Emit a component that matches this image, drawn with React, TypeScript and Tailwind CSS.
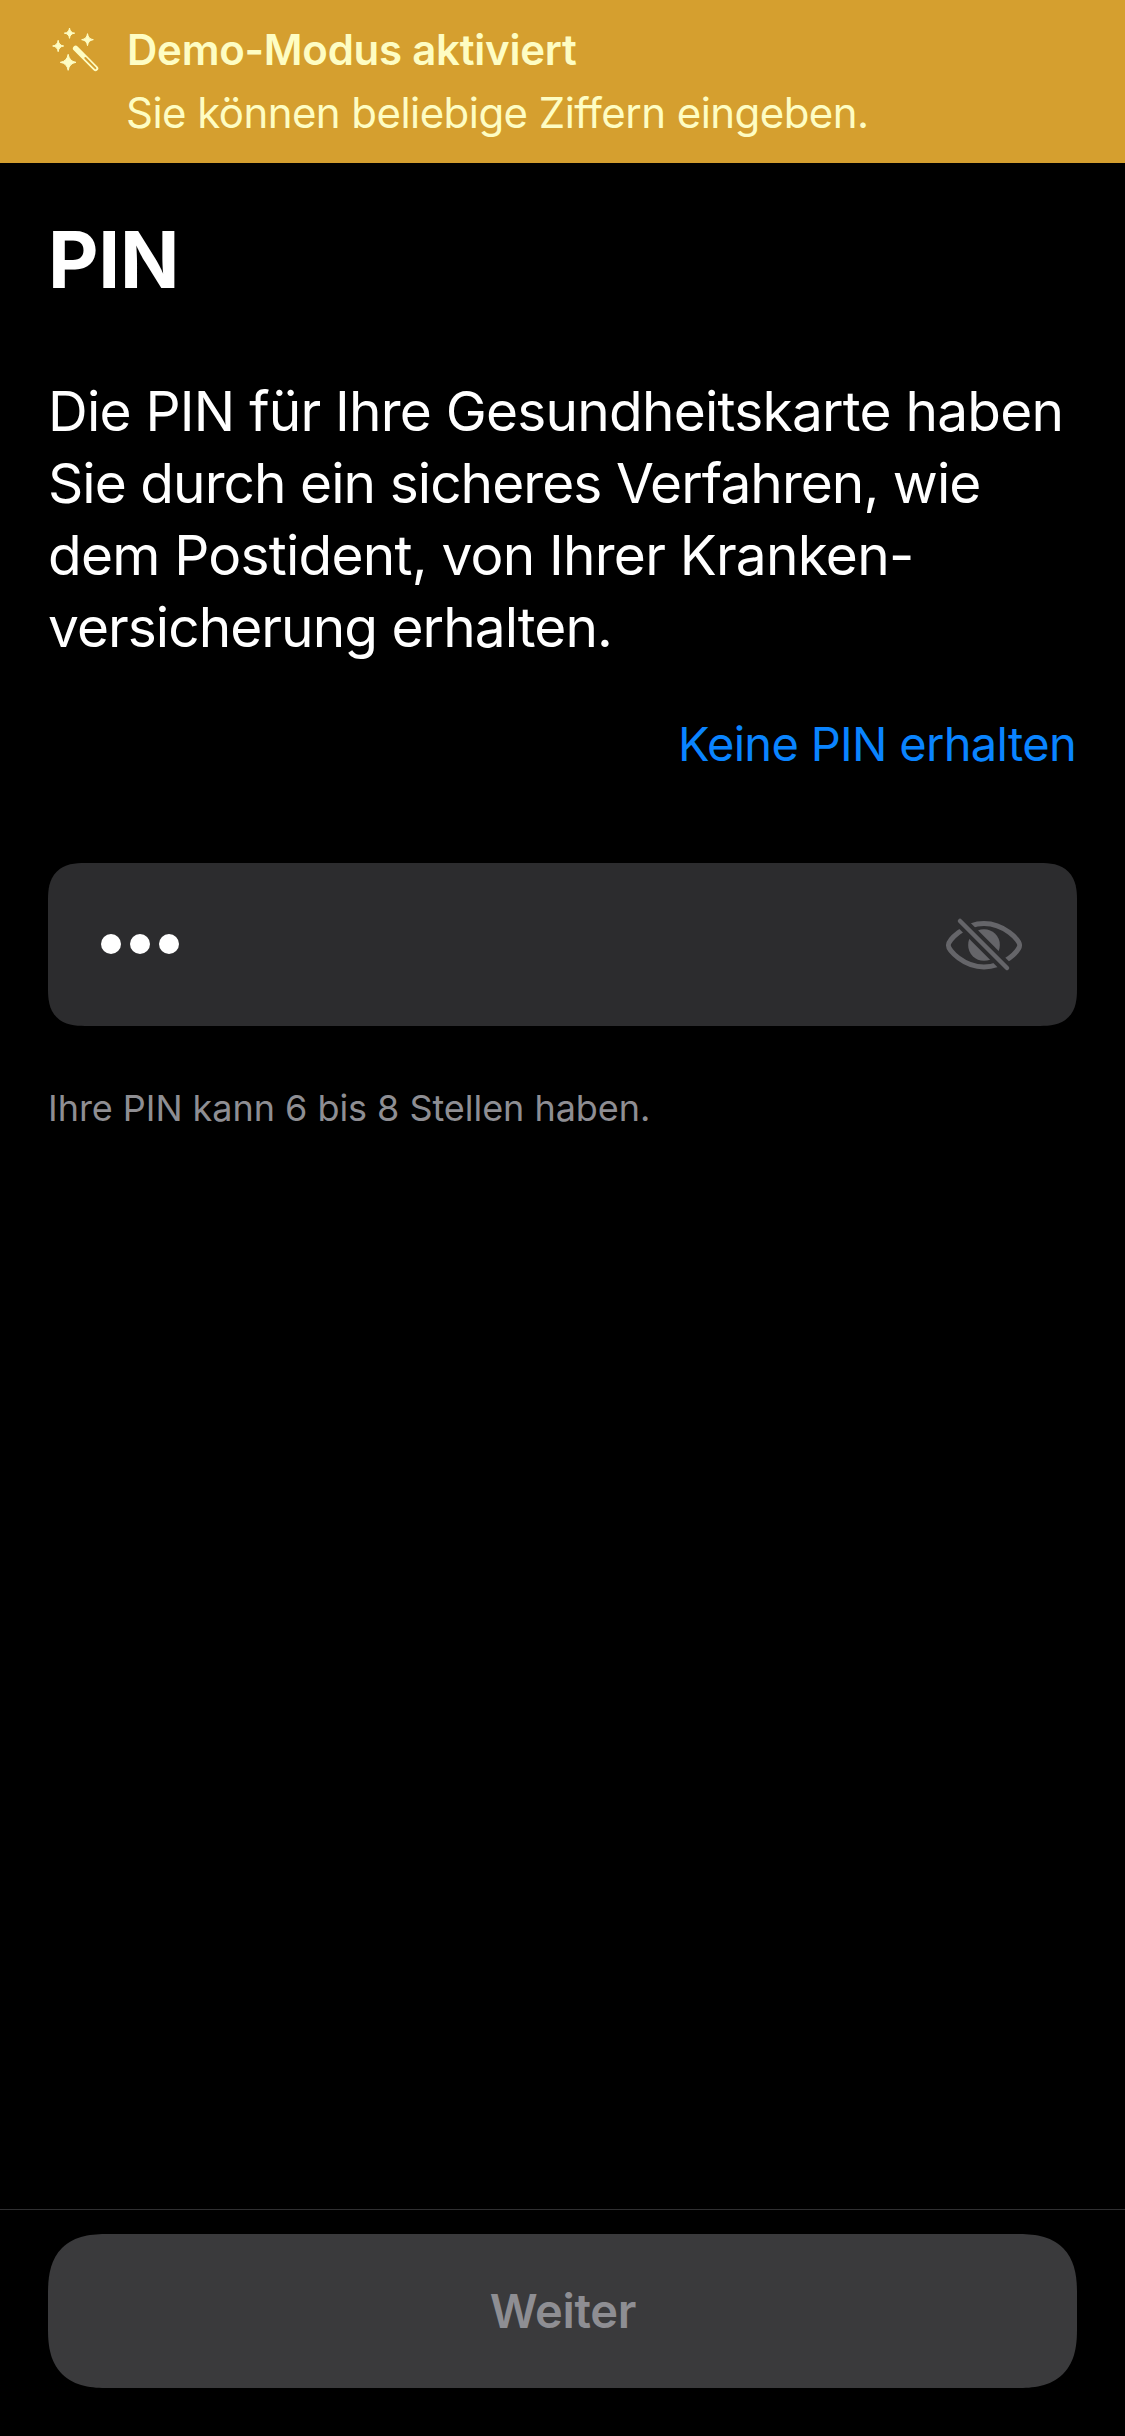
function WandIcon() {
  return (
    <svg className="h-[70px] w-[70px] shrink-0" viewBox="0 0 210 210" fill="#fefdc3" aria-hidden="true">
      <path d="M88.500 39Q90 53 104 54.500Q90 56 88.500 70Q87 56 73 54.500Q87 53 88.500 39Z" stroke="#fefdc3" strokeWidth="3" strokeLinejoin="round" />
      <path d="M142.500 56Q144.500 72 160 74Q144.500 76 142.500 92Q140.500 76 125 74Q140.500 72 142.500 56Z" stroke="#fefdc3" strokeWidth="3" strokeLinejoin="round" />
      <path d="M54.500 76Q56.500 91 71 93Q56.500 95 54.500 110Q52.500 95 38 93Q52.500 91 54.500 76Z" stroke="#fefdc3" strokeWidth="3" strokeLinejoin="round" />
      <path d="M84.500 118Q88 139 108 142Q88 145 84.500 166Q81 145 61 142Q81 139 84.500 118Z" stroke="#fefdc3" strokeWidth="3" strokeLinejoin="round" />
      <path d="M107 100L166.500 160" fill="none" stroke="#fefdc3" strokeWidth="16.500" strokeLinecap="round" />
      <path d="M136 129L166 159.500" fill="none" stroke="#d59f2f" strokeWidth="6" strokeLinecap="round" />
    </svg>
  );
}

function HiddenEyeIcon() {
  return (
    <svg className="h-[56px] w-[80px]" viewBox="72 200 240 168" fill="none" aria-hidden="true">
      <path
        d="M85 285C85 270 131 219.500 192 219.500S299 270 299 285S253 350 192 350S85 300 85 285Z"
        stroke="#656569"
        strokeWidth="14.500"
      />
      <circle cx="192" cy="284" r="47.500" fill="#656569" />
      <path d="M105 197L279 371" stroke="#2c2c2e" strokeWidth="37" />
      <path d="M120 212L261 353" stroke="#656569" strokeWidth="13.500" strokeLinecap="round" />
    </svg>
  );
}

function DemoBanner() {
  return (
    <header className="flex h-[163px] bg-[#d59f2f] pl-10 text-[42px] leading-[63px] text-[#fefdc3]">
      <div className="mt-[15px]">
        <WandIcon />
      </div>
      <div className="ml-4 pt-[18px] whitespace-nowrap">
        <p className="pl-px font-semibold tracking-[-0.25px]">Demo-Modus aktiviert</p>
        <p className="tracking-[-0.555px]">Sie können beliebige Ziffern eingeben.</p>
      </div>
    </header>
  );
}

function PinField({ digits }: { digits: number }) {
  return (
    <div className="mt-[89px] flex h-[163px] items-center justify-between rounded-[30px] bg-[#2c2c2e] px-[53px] [corner-shape:superellipse(1.38)] supports-[corner-shape:superellipse(1.38)]:rounded-[37px]">
      <div className="flex gap-[9px] pb-px">
        {Array.from({ length: digits }, (_, i) => (
          <span key={i} className="h-5 w-5 rounded-full bg-white" />
        ))}
      </div>
      <button type="button" aria-label="PIN anzeigen">
        <HiddenEyeIcon />
      </button>
    </div>
  );
}

export default function App() {
  return (
    <div className="flex h-[2436px] w-[1125px] flex-col bg-black font-['Inter',sans-serif] text-white">
      <DemoBanner />
      <main className="flex flex-1 flex-col px-12 pt-[50px]">
        <h1 className="text-[78px] leading-[94px] font-bold tracking-[-0.22px]">PIN</h1>
        <p className="mt-[68px] text-[55px] leading-[72px] tracking-[-0.777px] whitespace-nowrap">
          Die PIN für Ihre Gesundheitskarte haben
          <br />
          <span className="tracking-[-0.945px]">Sie durch ein sicheres Verfahren, wie</span>
          <br />
          dem Postident, von Ihrer Kranken-
          <br />
          <span className="tracking-[-0.956px]">versicherung erhalten.</span>
        </p>
        <button type="button" className="mt-[51px] mr-px self-end text-[47px] leading-[60px] tracking-[-0.68px] text-[#0a84ff]">
          Keine PIN erhalten
        </button>
        <PinField digits={3} />
        <p className="mt-[58px] text-[36px] leading-[48px] tracking-[-0.04px] text-[#8e8e93]">
          Ihre PIN kann 6 bis 8 Stellen haben.
        </p>
      </main>
      <footer className="border-t border-[#2f2f31] px-12 pt-6 pb-12">
        <button
          type="button"
          className="h-[154px] w-full rounded-[48px] bg-[#3a3a3c] pl-px text-[47px] font-semibold tracking-[-0.32px] text-[#8e8e93] [corner-shape:superellipse(1.38)] supports-[corner-shape:superellipse(1.38)]:rounded-[60px]"
        >
          Weiter
        </button>
      </footer>
    </div>
  );
}
